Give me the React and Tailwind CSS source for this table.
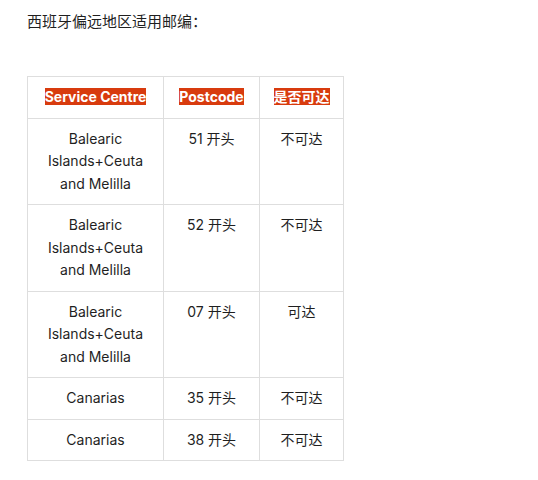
import React from "react";

const rows = [
  { centre: ["Balearic", "Islands+Ceuta", "and Melilla"], code: "51 开头", reach: "不可达" },
  { centre: ["Balearic", "Islands+Ceuta", "and Melilla"], code: "52 开头", reach: "不可达" },
  { centre: ["Balearic", "Islands+Ceuta", "and Melilla"], code: "07 开头", reach: "可达" },
  { centre: ["Canarias"], code: "35 开头", reach: "不可达" },
  { centre: ["Canarias"], code: "38 开头", reach: "不可达" },
];

const font = { fontFamily: 'Inter, "Noto Sans CJK SC", sans-serif' };

const App = () => {
  return (
    <div className="bg-white min-h-screen pl-[27px] pt-[11px] text-[#1f1f1f]" style={font}>
      <p className="text-[15px] leading-[22px]">西班牙偏远地区适用邮编：</p>

      <table className="mt-[43px] border-collapse text-[14px] leading-[22.5px] text-center">
        <thead>
          <tr>
            {["Service Centre", "Postcode", "是否可达"].map((h, i) => (
              <th
                key={h}
                className={`border border-[#dedede] py-[9px] align-top font-bold ${
                  i === 0 ? "w-[136px]" : i === 1 ? "w-[96px]" : "w-[84px]"
                }`}
              >
                <span className="bg-[#d83b0e] text-white">{h}</span>
              </th>
            ))}
          </tr>
        </thead>
        <tbody>
          {rows.map((r, i) => (
            <tr key={i}>
              <td className="border border-[#dedede] py-[9px] px-2 align-top">
                {r.centre.map((l) => (
                  <div key={l}>{l}</div>
                ))}
              </td>
              <td className="border border-[#dedede] py-[9px] align-top">{r.code}</td>
              <td className="border border-[#dedede] py-[9px] align-top">{r.reach}</td>
            </tr>
          ))}
        </tbody>
      </table>
    </div>
  );
};

export default App;
